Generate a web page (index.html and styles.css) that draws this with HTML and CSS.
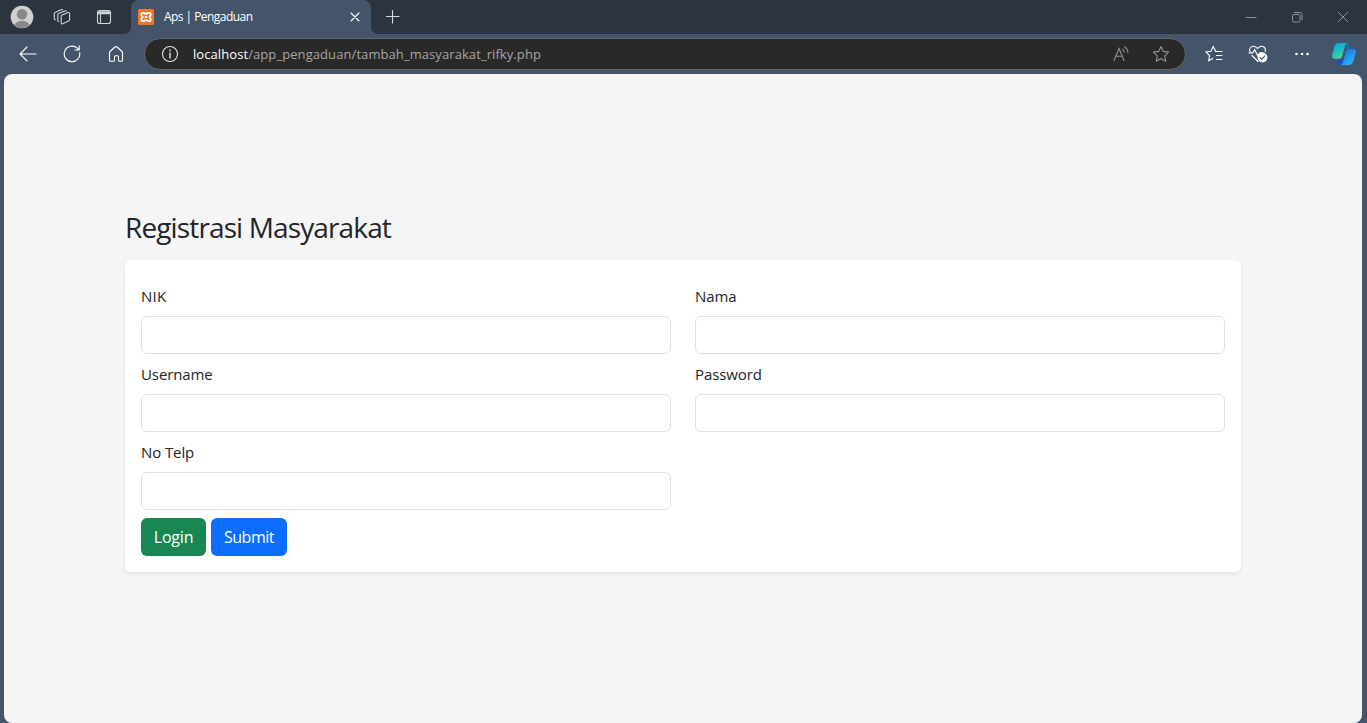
FILE: index.html
```html
<!DOCTYPE html>
<html lang="id">
<head>
<meta charset="utf-8">
<title>Aps | Pengaduan</title>
<link rel="stylesheet" href="styles.css">
</head>
<body>
<div class="browser">
  <div class="tabstrip">
    <div class="tabstrip-left">
      <svg class="avatar" width="24" height="24" viewBox="0 0 24 24"><defs><clipPath id="face"><circle cx="12" cy="12" r="11"/></clipPath></defs><circle cx="12" cy="12" r="11.3" fill="#d2d0ce"/><g clip-path="url(#face)" fill="#8a8886"><circle cx="12" cy="9.2" r="5.2"/><ellipse cx="12" cy="21.7" rx="8" ry="6"/></g></svg>
      <svg class="icon workspaces" width="18" height="18" viewBox="0 0 18 18"><path d="M8.200 8.500q0-1.100 1-1.500l5.800-2.400q1.600-.5 1.600 1v6q0 1-1 1.400L9.800 15.800q-1.600.5-1.600-1zM5.600 13.700 4.800 13V6.800q0-1 1-1.400l6-2.500q1-.4 1.500.2M2.300 11.700l-1-.7V5.600q0-1 1-1.400L8.200 1.700q1-.4 1.500.2"/></svg>
      <svg class="icon tab-actions" width="16" height="16" viewBox="0 0 16 16"><rect x="1.5" y="1.5" width="13" height="13" rx="2.300"/><path d="M2.300 3h11.400M2 4.500h12" stroke-width="1.500"/><path d="M4.500 5v9"/></svg>
    </div>
    <div class="tab">
      <svg width="16" height="16" viewBox="0 0 16 16"><rect width="16" height="16" rx="1.500" fill="#f37623"/><path d="M4.400 3.800h1.400L8 5l2.200-1.200h1.400q1 0 1 1v1.600L11.300 8l1.300 1.600v1.600q0 1-1 1h-1.400L8 11l-2.200 1.200H4.400q-1 0-1-1V9.600L4.700 8 3.400 6.400V4.800q0-1 1-1zM6.800 8h2.400" fill="none" stroke="#fff" stroke-width="1.800" stroke-linejoin="round"/></svg>
      <span class="tab-title">Aps | Pengaduan</span>
      <svg class="icon tab-close" width="10" height="10" viewBox="0 0 10 10"><path d="m1 1 8 8M9 1 1 9"/></svg>
    </div>
    <svg class="icon new-tab" width="14" height="14" viewBox="0 0 14 14"><path d="M6.500.5v12.500M.5 6.500H13"/></svg>
    <div class="window-controls">
      <svg class="icon" width="12" height="12" viewBox="0 0 12 12"><path d="M1 6.500h10"/></svg>
      <svg class="icon" width="12" height="12" viewBox="0 0 12 12"><rect x="1.500" y="3.500" width="7.500" height="7.500" rx="1.500"/><path d="M3.500 1.500H9q2 0 2 2V9"/></svg>
      <svg class="icon" width="12" height="12" viewBox="0 0 12 12"><path d="m1 1 10 10M11 1 1 11"/></svg>
    </div>
  </div>
  <div class="toolbar">
    <div class="nav">
      <svg class="icon" width="18" height="18" viewBox="0 0 18 18"><path d="M17 9H1.500M8 2 1 9l7 7"/></svg>
      <svg class="icon" width="18" height="18" viewBox="0 0 18 18"><path d="M16.700 7.500A7.800 7.800 0 1 1 14 2.900l2 2M16.200.8V5H12"/></svg>
      <svg class="icon" width="18" height="18" viewBox="0 0 18 18"><path d="M2.500 7.800Q2.500 7 3 6.500L8 2q1-.8 2 0l5 4.500q.5.500.5 1.300v7.400q0 1-1 1h-2.200q-.8 0-.8-.9v-3.600q0-1-1-1h-2q-1 0-1 1v3.600q0 .9-.8.900H3.500q-1 0-1-1z"/></svg>
    </div>
    <div class="address">
      <svg class="icon info" width="18" height="18" viewBox="0 0 18 18"><circle cx="9" cy="9" r="7.500"/><path d="M9 8v5M9 5v.8" stroke-width="1.400"/></svg>
      <span class="url"><b>localhost</b>/app_pengaduan/tambah_masyarakat_rifky.php</span>
      <svg class="icon dim read" width="18" height="18" viewBox="0 0 18 18"><path d="m2 15.500 5-12 5 12M3.800 11.300h6.400M10.800 4.100q1.200 1 1.300 3M12.600 1.700q3 2 3.300 5.800"/></svg>
      <svg class="icon dim" width="18" height="18" viewBox="0 0 18 18"><path d="m9 1.500 2.300 4.900 5.400.7-4 3.700 1 5.400L9 13.600l-4.700 2.600 1-5.400-4-3.700 5.400-.7z" stroke-linejoin="round"/></svg>
    </div>
    <div class="tools">
      <svg class="icon" width="18" height="18" viewBox="0 0 18 18"><path d="M10.500 5.900 8.200 1.500 5.900 6.200l-5 .7 3.700 3.600-.9 5.300 4-2.200M10.500 6.500H17M11.500 10.500H17M11.500 14.500H17"/></svg>
      <svg class="icon" width="20" height="18" viewBox="0 0 20 18"><path d="M2 6.500C.5 3 4.500-.2 8 2.200l1.500 1.400L11 2.200c3.500-2.400 7.300.3 6.200 4.300M1 7.900h3.700l2-3.200 3 6 2-3h3.100M4 10.500l6 6"/><circle cx="14.500" cy="12.500" r="4.900" fill="#fff" stroke="none"/><path d="m12 12.600 1.700 1.600 3.200-3.300" stroke="#44546a"/></svg>
      <svg width="18" height="18" viewBox="0 0 18 18" fill="#fff"><circle cx="3.500" cy="9" r="1.300"/><circle cx="9" cy="9" r="1.300"/><circle cx="14.500" cy="9" r="1.300"/></svg>
    </div>
    <svg class="copilot" width="26" height="24" viewBox="0 0 26 24"><defs><linearGradient id="teal" x2=".5" y2="1"><stop stop-color="#12a5dc"/><stop offset=".5" stop-color="#18b9cb"/><stop offset="1" stop-color="#5cd58a"/></linearGradient><linearGradient id="blue" x2=".6" y2="1"><stop stop-color="#2366dd"/><stop offset="1" stop-color="#20b6fb"/></linearGradient></defs><path d="M6.500 1H16q1.500 0 2.500 3l1.300 3.500H16L13.500 1z" fill="#0876a8"/><path d="M6.500 16h4l2.500 6.800H9q-1.600-.2-2-2z" fill="#174fd3"/><path d="M7.500 1H16q-1.400.3-2 2.500l-3 11q-.6 2.300-2.700 2.300H4Q.7 16.800 1 13.500L3.500 4Q4.500 1 7.500 1z" fill="url(#teal)"/><path d="M17.500 7h4.200q3.500.1 3.100 3.500l-2.600 9q-1.200 3.400-4.200 3.500H9.500q1.700-.2 2.400-2.600L15 9.500Q15.700 7 17.500 7z" fill="url(#blue)"/></svg>
  </div>
  <main class="page">
    <div class="container">
      <h1 class="title"><span>Registrasi Masyarakat</span></h1>
      <form class="card">
        <div class="fields">
          <div class="field"><label for="nik" class="l-nik">NIK</label><input id="nik" type="text"></div>
          <div class="field"><label for="nama">Nama</label><input id="nama" type="text"></div>
          <div class="field"><label for="username">Username</label><input id="username" type="text"></div>
          <div class="field"><label for="password">Password</label><input id="password" type="password"></div>
          <div class="field"><label for="telp">No Telp</label><input id="telp" type="text"></div>
        </div>
        <div class="actions"><button type="button" class="btn login">Login</button><button type="button" class="btn submit">Submit</button></div>
      </form>
    </div>
  </main>
</div>
</body>
</html>
```
FILE: styles.css
```css
* { box-sizing: border-box; }
body { margin: 0; font-family: "Open Sans", "Noto Sans", sans-serif; color: #212529; }
svg { display: block; flex: none; }
.icon { fill: none; stroke: #fff; stroke-width: 1.1; stroke-linecap: round; }
.browser { height: 723px; display: flex; flex-direction: column; background: #44546a; overflow: hidden; }

.tabstrip { height: 34px; flex: none; display: flex; background: #44546a; }
.tabstrip-left { width: 131px; background: #2b343f; border-bottom-right-radius: 7px; display: flex; align-items: center; padding-left: 10px; }
.workspaces { margin-left: 19px; stroke: #d0d3d7; }
.tab-actions { margin-left: 25px; stroke: #d0d3d7; }
.tab { width: 240px; display: flex; align-items: center; padding: 0 11px 0 7px; position: relative; background: linear-gradient(#2b343f, #2b343f) 0 0 / 100% 12px no-repeat; z-index: 0; }
.tab::before { content: ""; position: absolute; inset: 0; background: #44546a; border-radius: 8px 8px 0 0; z-index: -1; }
.tab-title { margin-left: 10px; font-size: 12px; line-height: 16px; letter-spacing: -0.55px; color: #fff; white-space: nowrap; }
.tab-close { margin-left: auto; }
.tabstrip > .new-tab { box-sizing: content-box; padding: 10px 0 10px 15px; background: #2b343f; border-bottom-left-radius: 7px; stroke: #d8dadd; }
.window-controls { flex: 1; display: flex; justify-content: flex-end; align-items: center; gap: 34px; padding-right: 18px; background: #2b343f; }
.window-controls .icon { stroke: #8b9198; stroke-width: 1; }

.toolbar { height: 40px; flex: none; display: flex; align-items: center; }
.nav { width: 144px; display: flex; gap: 26px; padding-left: 19px; }
.address { width: 1042px; height: 32px; display: flex; align-items: center; padding: 0 15px 0 16px; border: 1px solid #666; border-radius: 16px; background: #292929; }
.info { stroke: #e3e3e3; }
.dim { stroke: #929292; }
.url { margin-left: 14px; flex: 1; font-size: 13px; line-height: 18px; letter-spacing: 0.08px; color: #a5a5a5; white-space: nowrap; }
.url b { font-weight: 400; color: #fff; }
.read { margin-right: 22px; }
.tools { display: flex; gap: 25px; margin-left: 19px; }
.copilot { margin-left: 20px; }

.page { flex: 1; margin: 0 5px 0 4px; background: #f5f5f5; border-radius: 8px; display: flex; justify-content: center; align-items: flex-start; }
.container { width: 1116px; padding-top: 136px; }
.title { margin: 0 0 16px; font-size: 28px; font-weight: 400; line-height: 34px; letter-spacing: -0.87px; }
.card { background: #fff; border-radius: 6px; padding: 16px; box-shadow: 0 2px 4px rgba(0, 0, 0, .075); }
.fields { display: grid; grid-template-columns: 1fr 1fr; column-gap: 24px; }
.field { padding-top: 8px; }
.field label { display: block; margin-bottom: 8px; font-size: 15px; line-height: 24px; letter-spacing: -0.1px; }
.field .l-nik { letter-spacing: 0.2px; }
.field input { display: block; width: 100%; height: 38px; border: 1px solid #dee2e6; border-radius: 6px; background: #fff; }
.actions { display: flex; gap: 5px; margin-top: 8px; }
.btn { height: 38px; padding: 0; border: 0; border-radius: 6px; color: #fff; font: 400 16px/24px "Open Sans", "Noto Sans", sans-serif; }
.login { width: 65px; background: #198754; letter-spacing: -0.2px; }
.submit { width: 76px; background: #0d6efd; letter-spacing: -0.5px; }
```
